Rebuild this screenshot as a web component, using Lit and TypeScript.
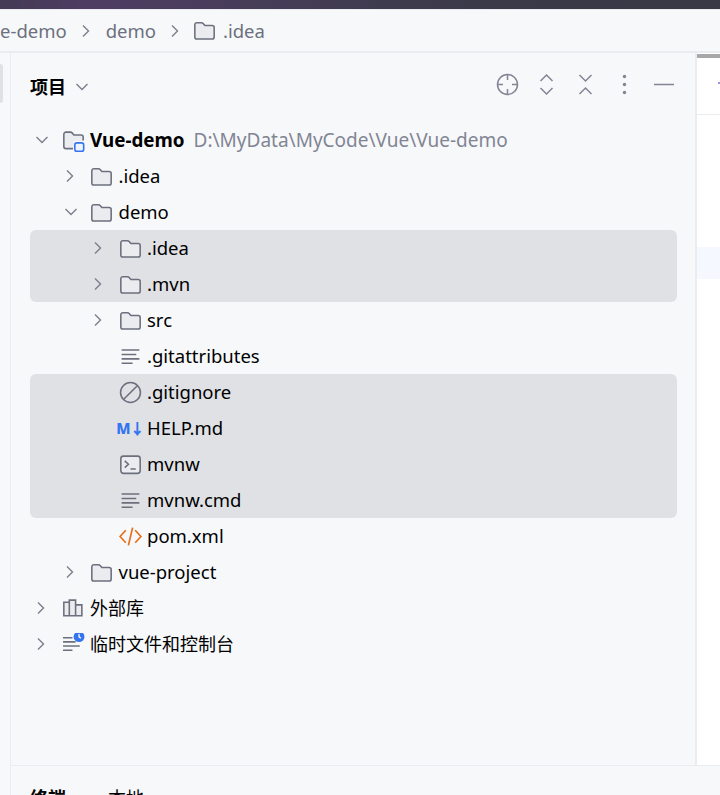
import { html, css, svg, LitElement } from 'lit';
import { customElement } from 'lit/decorators.js';

type Row = {
  depth: number;
  icon: string;
  label: string;
  open?: boolean;
  leaf?: boolean;
  sel?: 'first' | 'mid' | 'last';
  bold?: boolean;
  cn?: boolean;
  hint?: string;
};

const ROWS: Row[] = [
  { depth: 0, icon: 'module', label: 'Vue-demo', open: true, bold: true, hint: 'D:\\MyData\\MyCode\\Vue\\Vue-demo' },
  { depth: 1, icon: 'folder', label: '.idea' },
  { depth: 1, icon: 'folder', label: 'demo', open: true },
  { depth: 2, icon: 'folder', label: '.idea', sel: 'first' },
  { depth: 2, icon: 'folder', label: '.mvn', sel: 'last' },
  { depth: 2, icon: 'folder', label: 'src' },
  { depth: 2, icon: 'text', label: '.gitattributes', leaf: true },
  { depth: 2, icon: 'ignore', label: '.gitignore', leaf: true, sel: 'first' },
  { depth: 2, icon: 'md', label: 'HELP.md', leaf: true, sel: 'mid' },
  { depth: 2, icon: 'shell', label: 'mvnw', leaf: true, sel: 'mid' },
  { depth: 2, icon: 'text', label: 'mvnw.cmd', leaf: true, sel: 'last' },
  { depth: 2, icon: 'xml', label: 'pom.xml', leaf: true },
  { depth: 1, icon: 'folder', label: 'vue-project' },
  { depth: 0, icon: 'lib', label: '外部库', cn: true },
  { depth: 0, icon: 'scratch', label: '临时文件和控制台', cn: true },
];

const FOLDER = 'M1.75 5.5a2 2 0 0 1 2-2h4.4a2 2 0 0 1 1.5.7l1.75 2h6.85a2 2 0 0 1 2 2v9a2 2 0 0 1-2 2H3.75a2 2 0 0 1-2-2z';

const box = (body: unknown, size = 23) =>
  html`<svg width=${size} height=${size} viewBox="0 0 22 22" fill="none" stroke="#6c707e" stroke-width="1.5">${body}</svg>`;

const chevron = (open: boolean) =>
  html`<svg width="14" height="14" viewBox="0 0 14 14" fill="none" stroke="#7b7f8c" stroke-width="1.4">
    <path d=${open ? 'M1.5 4 7 9.500l5.500-5.500' : 'M3 1.500 8.500 7 3 12.500'}></path>
  </svg>`;

const ICONS: Record<string, () => unknown> = {
  folder: () => box(svg`<path d=${FOLDER} fill="#ebecf0"></path>`),
  module: () =>
    box(svg`
      <path d="M10.500 18.750H3.750a2 2 0 0 1-2-2V5a2 2 0 0 1 2-2h4.400a2 2 0 0 1 1.500.7l1.750 2h6.850a2 2 0 0 1 2 2V11.500h-9v7.250z" fill="#ebecf0" stroke="none"></path>
      <path d="M10.500 18.750H3.750a2 2 0 0 1-2-2V5a2 2 0 0 1 2-2h4.400a2 2 0 0 1 1.500.7l1.750 2h6.850a2 2 0 0 1 2 2V11"></path>
      <rect x="12.250" y="13.250" width="8.500" height="8" rx="2" stroke="#3574f0" fill="#edf3ff"></rect>
    `),
  text: () => box(svg`<path d="M2.500 4.750h17M2.500 9h14M2.500 13.250h17M2.500 17.500h10.500"></path>`),
  ignore: () => box(svg`<circle cx="11" cy="11" r="9.500"></circle><path d="m4.500 17.500 13-13"></path>`),
  shell: () =>
    box(svg`
      <rect x="1.750" y="3" width="18.500" height="16.500" rx="2.500" fill="#ebecf0"></rect>
      <path d="m5.500 7.500 3.500 3.250-3.500 3.250M11 15.250h5"></path>
    `),
  xml: () =>
    box(svg`<path d="M6.500 5 1 11l5.500 6M15.500 5 21 11l-5.500 6M13 2.500 9 19.500" stroke="#e66d17" stroke-width="1.600"></path>`),
  lib: () =>
    box(svg`
      <path d="M1.750 18V5h5.250v13zM7 18V3h6v15zM13 18V7.500h6V18z" fill="#ebecf0"></path>
    `),
  scratch: () =>
    box(svg`
      <path d="M1 4.500h9M1 8.500h12M1 12.500h16M1 16.500h9"></path>
      <circle cx="16.300" cy="3.500" r="5.200" fill="#3574f0" stroke="none"></circle>
      <path d="M16.300 .9V3.700l1.750 1.250" stroke="#fff" stroke-width="1.200"></path>
    `),
};

@customElement('app-root')
export class AppRoot extends LitElement {
  static styles = css`
    :host {
      display: flex;
      flex-direction: column;
      width: 720px;
      height: 795px;
      overflow: hidden;
      background: #f7f8fa;
      color: #000;
      font-family: 'Noto Sans', 'Noto Sans CJK SC', sans-serif;
      font-size: 18px;
    }
    .titlebar {
      flex: none;
      height: 9px;
      background: linear-gradient(90deg, #443b55 0, #4f3c63 90px, #463d58 260px, #3a3a48 480px, #393a46 100%);
    }
    .crumbs {
      flex: none;
      box-sizing: border-box;
      height: 44px;
      display: flex;
      align-items: center;
      border-top: 1px solid #ebecf0;
      border-bottom: 2px solid #ebecf0;
      color: #6c707e;
      font-size: 18.5px;
      line-height: 24px;
    }
    .crumbs svg {
      flex: none;
    }
    .crumb-sep {
      display: flex;
      margin: 0 12px 0 13px;
    }
    .crumb-folder {
      display: flex;
      margin: 0 7px 0 -2px;
    }
    .main {
      flex: 1;
      min-height: 0;
      display: flex;
    }
    .strip {
      flex: none;
      box-sizing: border-box;
      width: 11px;
      padding-top: 11px;
      border-right: 1px solid #ebecf0;
    }
    .strip i {
      display: block;
      width: 3px;
      height: 39px;
      background: #dfe1e5;
      border-radius: 0 5px 5px 0;
    }
    .center {
      flex: 1;
      min-width: 0;
      display: flex;
      flex-direction: column;
    }
    .columns {
      flex: 1;
      min-height: 0;
      display: flex;
    }
    .panel {
      flex: none;
      box-sizing: border-box;
      width: 686px;
      border-right: 2px solid #ebecf0;
    }
    .header {
      height: 69px;
      box-sizing: border-box;
      padding: 0 20px 2px 19px;
      display: flex;
      align-items: center;
    }
    .title {
      font-weight: 700;
      line-height: 24px;
      margin-right: 9px;
    }
    .title-caret {
      display: flex;
      flex: 1;
    }
    .tools {
      display: flex;
      gap: 16px;
      margin-top: -5px;
    }
    .tools svg {
      display: block;
    }
    .tree {
      padding: 0 18px 0 19px;
    }
    .row {
      height: 36px;
      display: flex;
      align-items: center;
      white-space: nowrap;
      font-size: 18.500px;
      line-height: 24px;
    }
    .row.cn {
      font-size: 18px;
    }
    .row.first {
      border-radius: 6px 6px 0 0;
    }
    .row.last {
      border-radius: 0 0 6px 6px;
    }
    .row.first,
    .row.mid,
    .row.last {
      background: #dfe1e5;
    }
    .arrow {
      flex: none;
      width: 14px;
      height: 14px;
      display: flex;
      margin-right: 12.5px;
    }
    .icon {
      flex: none;
      width: 23px;
      height: 23px;
      display: flex;
      align-items: center;
      justify-content: center;
      margin-right: 5.500px;
    }
    .md {
      color: #3574f0;
      font-size: 15px;
      font-weight: 800;
      letter-spacing: -1px;
    }
    .bold {
      font-size: 18.800px;
      font-weight: 700;
    }
    .hint {
      color: #818594;
      font-size: 19px;
      margin-left: 9px;
    }
    .editor {
      flex: 1;
      min-width: 0;
      background: #fff;
      display: flex;
      flex-direction: column;
    }
    .editor-top {
      flex: none;
      height: 4px;
      margin-top: 1px;
      background: #a8a8a8;
    }
    .editor-tab {
      flex: none;
      height: 56px;
      border-bottom: 1px solid #ebecf0;
      display: flex;
      flex-direction: column;
      align-items: flex-end;
    }
    .editor-tab i {
      width: 2px;
      height: 2px;
      margin-top: 24px;
      background: #a98be8;
    }
    .editor-line {
      height: 32px;
      margin-top: 132px;
      background: #f5f8fe;
    }
    .terminal {
      flex: none;
      height: 30px;
      box-sizing: border-box;
      padding: 20px 0 0 19px;
      border-top: 1px solid #ebecf0;
      display: flex;
      align-items: flex-start;
      line-height: 24px;
    }
    .terminal b {
      width: 78px;
    }
    .terminal svg {
      margin: 6px 0 0 17px;
    }
  `;

  private renderRow(r: Row) {
    return html`<div
      class="row ${r.sel ?? ''} ${r.cn ? 'cn' : ''}"
      style="padding-left:${5 + r.depth * 28.5}px"
    >
      <span class="arrow">${r.leaf ? '' : chevron(!!r.open)}</span>
      <span class="icon">
        ${r.icon === 'md' ? html`<span class="md">M↓</span>` : ICONS[r.icon]()}
      </span>
      <span class=${r.bold ? 'bold' : ''}>${r.label}</span>
      ${r.hint ? html`<span class="hint">${r.hint}</span>` : ''}
    </div>`;
  }

  protected render() {
    const tool = '#818594';
    return html`
      <div class="titlebar"></div>
      <div class="crumbs">
        <span>e-demo</span>
        <span class="crumb-sep">${chevron(false)}</span>
        <span>demo</span>
        <span class="crumb-sep">${chevron(false)}</span>
        <span class="crumb-folder">${ICONS.folder()}</span>
        <span>.idea</span>
      </div>
      <div class="main">
        <div class="strip"><i></i></div>
        <div class="center">
          <div class="columns">
            <div class="panel">
              <div class="header">
                <span class="title">项目</span>
                <span class="title-caret">${chevron(true)}</span>
                <div class="tools">
                  <svg width="23" height="23" viewBox="0 0 23 23" fill="none" stroke=${tool} stroke-width="1.500">
                    <circle cx="11.500" cy="11.500" r="10"></circle>
                    <path d="M11.500 1.500v5.500M11.500 16v5.500M1.500 11.500H7M16 11.500h5.500"></path>
                  </svg>
                  <svg width="23" height="23" viewBox="0 0 23 23" fill="none" stroke=${tool} stroke-width="1.500">
                    <path d="m5.500 8 6-6 6 6M5.500 15l6 6 6-6"></path>
                  </svg>
                  <svg width="23" height="23" viewBox="0 0 23 23" fill="none" stroke=${tool} stroke-width="1.500">
                    <path d="m5.500 2 6 6 6-6M5.500 21l6-6 6 6"></path>
                  </svg>
                  <svg width="23" height="23" viewBox="0 0 23 23" fill=${tool}>
                    <circle cx="11.500" cy="3.500" r="1.700"></circle>
                    <circle cx="11.500" cy="11.500" r="1.700"></circle>
                    <circle cx="11.500" cy="19.500" r="1.700"></circle>
                  </svg>
                  <svg width="23" height="23" viewBox="0 0 23 23" fill="none" stroke=${tool} stroke-width="1.500">
                    <path d="M2 11.500h20"></path>
                  </svg>
                </div>
              </div>
              <div class="tree">${ROWS.map(r => this.renderRow(r))}</div>
            </div>
            <div class="editor">
              <div class="editor-top"></div>
              <div class="editor-tab"><i></i></div>
              <div class="editor-line"></div>
            </div>
          </div>
          <div class="terminal">
            <b>终端</b>
            <span>本地</span>
            ${chevron(true)}
          </div>
        </div>
      </div>
    `;
  }
}
